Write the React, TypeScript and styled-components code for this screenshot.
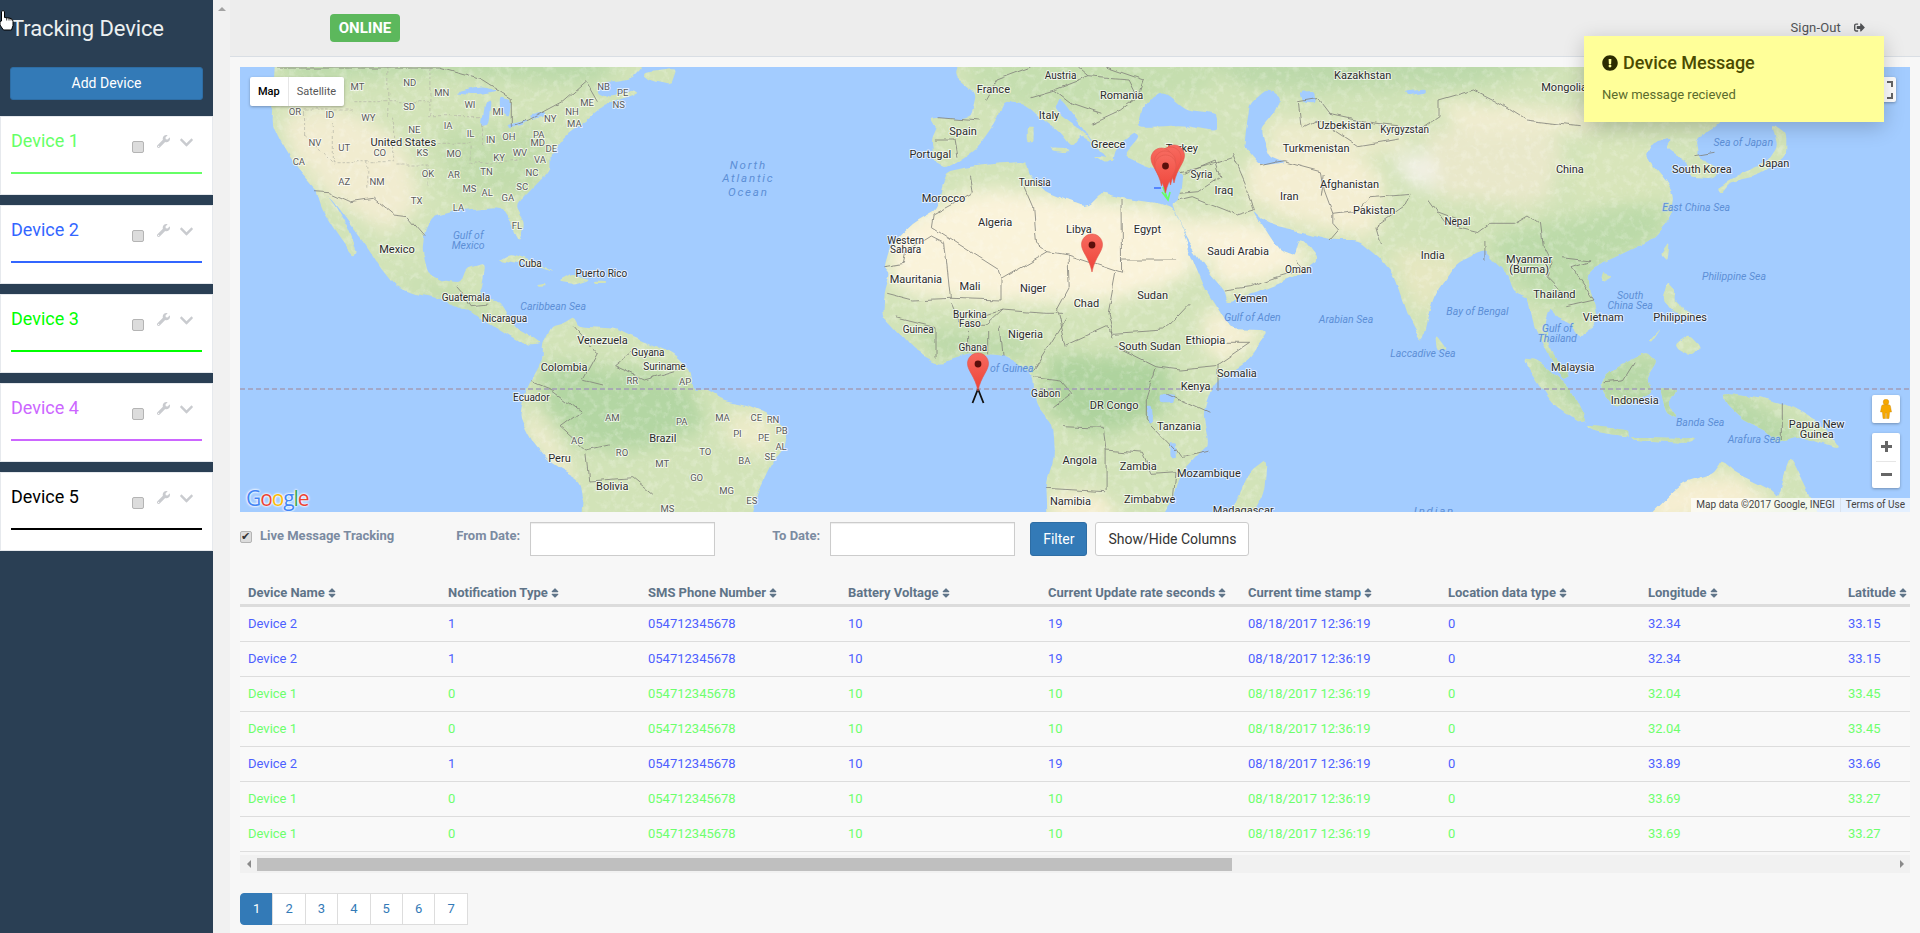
import React from "react";
import styled, { createGlobalStyle } from "styled-components";
import { FaChevronDown, FaExclamationCircle, FaSignOutAlt, FaSort, FaWrench } from "react-icons/fa";

const GlobalStyle = createGlobalStyle`
  html, body {
    margin: 0;
    padding: 0;
    height: 100%;
    overflow: hidden;
  }
  body {
    font-family: Roboto, "Liberation Sans", sans-serif;
    font-size: 13px;
    color: #73879c;
    background: #f7f7f7;
  }
`;

const Page = styled.div`
  width: 1920px;
  height: 933px;
  display: flex;
  position: relative;
  overflow: hidden;
`;

/* ---------- sidebar ---------- */

const Sidebar = styled.aside`
  width: 213px;
  flex: none;
  background: #2a3f54;
  display: flex;
  flex-direction: column;
`;

const Brand = styled.h1`
  margin: 0;
  padding: 16px 0 0 11px;
  height: 51px;
  box-sizing: border-box;
  font-size: 22px;
  line-height: 26px;
  font-weight: 400;
  letter-spacing: -0.1px;
  color: #ecf0f1;
`;

const AddButton = styled.button`
  display: block;
  margin: 16px 10px;
  width: 193px;
  height: 33px;
  padding: 0 0 2px;
  background: #337ab7;
  border: 1px solid #2e6da4;
  border-radius: 3px;
  color: #fff;
  font: 400 14px Roboto, sans-serif;
`;

const DeviceCard = styled.section`
  height: 79px;
  box-sizing: border-box;
  margin-bottom: 10px;
  padding: 0 10px;
  background: #fff;
  border: 1px solid #e6e9ed;
`;

const CardHead = styled.div`
  height: 55px;
  display: flex;
  align-items: flex-start;
  padding-right: 8px;
`;

const DeviceName = styled.div<{ $color: string }>`
  flex: 1;
  margin-top: 12px;
  font-size: 18px;
  line-height: 24px;
  color: ${(p) => p.$color};
`;

const Check = styled.input.attrs({ type: "checkbox" })`
  appearance: none;
  margin: 0;
  width: 12px;
  height: 12px;
  flex: none;
  position: relative;
  background: #dcdcdc;
  border: 1px solid #b4b4b4;
  border-radius: 2px;
  box-sizing: border-box;

  &:checked::after {
    content: "✔";
    position: absolute;
    left: 0;
    top: -3px;
    font-size: 11px;
    line-height: 14px;
    color: #333;
  }
`;

const CardCheck = styled(Check)`
  margin: 24px 0 0 0;
`;

const CardTool = styled.span<{ $gap: number; $top: number; $size: number }>`
  display: inline-flex;
  margin: ${(p) => p.$top}px 0 0 ${(p) => p.$gap}px;
  color: #c9cbcf;
  font-size: ${(p) => p.$size}px;
`;

const ColorLine = styled.div<{ $color: string }>`
  height: 2px;
  background: ${(p) => p.$color};
`;

const SideScroll = styled.div`
  width: 17px;
  flex: none;
  background: #f1f1f1;
  display: flex;
  justify-content: center;
  padding-top: 7px;
  box-sizing: border-box;
`;

const UpArrow = styled.span`
  width: 0;
  height: 0;
  border-left: 4px solid transparent;
  border-right: 4px solid transparent;
  border-bottom: 4px solid #a3a3a3;
`;

/* ---------- main column ---------- */

const Main = styled.main`
  flex: 1;
  min-width: 0;
  display: flex;
  flex-direction: column;
  background: #f7f7f7;
`;

const TopBar = styled.header`
  height: 57px;
  flex: none;
  box-sizing: border-box;
  background: #ededed;
  border-bottom: 1px solid #d9dee4;
  display: flex;
  align-items: center;
  justify-content: space-between;
  padding: 0 55px 0 100px;
`;

const OnlineBadge = styled.span`
  width: 70px;
  height: 28px;
  background: #5cb85c;
  border-radius: 4px;
  color: #fff;
  font-size: 15px;
  font-weight: 700;
  line-height: 28px;
  text-align: center;
`;

const SignOut = styled.a`
  display: flex;
  align-items: center;
  gap: 13px;
  color: #515356;
  font-size: 13px;
  letter-spacing: 0.15px;
  margin-bottom: 1px;

  svg {
    width: 11px;
    height: 11px;
  }
`;

const Content = styled.div`
  padding: 10px 10px 0;
  display: flex;
  flex-direction: column;
`;

/* ---------- map ---------- */

const MapBox = styled.div`
  position: relative;
  width: 1670px;
  height: 445px;
  overflow: hidden;
  background: #a3ccff;
`;

const MapSvg = styled.svg`
  display: block;
`;

type LabelKind = "country" | "state" | "sea" | "small" | "ocean";

const MapLabel = styled.text<{ $kind: LabelKind }>`
  font-family: Roboto, sans-serif;
  text-anchor: middle;
  dominant-baseline: central;
  paint-order: stroke;
  stroke-linejoin: round;
  font-size: ${(p) => ({ country: 11, state: 9.5, sea: 10.5, small: 10, ocean: 11.5 })[p.$kind]}px;
  letter-spacing: ${(p) => (p.$kind === "ocean" ? 1.8 : 0)}px;
  font-style: ${(p) => (p.$kind === "sea" || p.$kind === "ocean" ? "italic" : "normal")};
  fill: ${(p) =>
    p.$kind === "sea" || p.$kind === "ocean" ? "#5d8fd6" : p.$kind === "state" ? "#5a5a5a" : "#2b2b2b"};
  stroke: ${(p) =>
    p.$kind === "sea" || p.$kind === "ocean" ? "rgba(163,204,255,.6)" : "rgba(255,255,255,.7)"};
  stroke-width: ${(p) => (p.$kind === "sea" || p.$kind === "ocean" ? 1 : 2)}px;
`;

const MapTypeBar = styled.div`
  position: absolute;
  left: 10px;
  top: 10px;
  height: 29px;
  display: flex;
  background: #fff;
  border-radius: 2px;
  box-shadow: 0 1px 3px rgba(0, 0, 0, 0.3);
  font-size: 11px;
  line-height: 29px;
`;

const MapType = styled.span<{ $active?: boolean }>`
  padding: 0 8px;
  color: ${(p) => (p.$active ? "#000" : "#565656")};
  font-weight: ${(p) => (p.$active ? 500 : 400)};
  border-left: ${(p) => (p.$active ? "none" : "1px solid #e6e6e6")};
`;

const MapButton = styled.div<{ $top: number; $right: number; $w: number; $h: number }>`
  position: absolute;
  top: ${(p) => p.$top}px;
  right: ${(p) => p.$right}px;
  width: ${(p) => p.$w}px;
  height: ${(p) => p.$h}px;
  background: #fff;
  border-radius: 2px;
  box-shadow: 0 1px 3px rgba(0, 0, 0, 0.3);
  display: flex;
  flex-direction: column;
  align-items: center;
  justify-content: center;
`;

const ZoomStep = styled.div`
  flex: 1;
  width: 100%;
  display: flex;
  align-items: center;
  justify-content: center;
  & + & {
    position: relative;
  }
  & + &::before {
    content: "";
    position: absolute;
    top: 0;
    left: 4px;
    right: 4px;
    height: 1px;
    background: #e6e6e6;
  }
`;

const GoogleMark = styled.div`
  position: absolute;
  left: 6px;
  bottom: 2px;
  font: 500 21px/24px "Open Sans", Roboto, sans-serif;
  letter-spacing: -1.1px;
  text-shadow: 0 0 2px #fff, 0 0 2px #fff, 0 0 3px #fff;
`;

const Letter = styled.span<{ $color: string }>`
  color: ${(p) => p.$color};
`;

const Attribution = styled.div`
  position: absolute;
  right: 0;
  bottom: 0;
  height: 14px;
  display: flex;
  background: rgba(255, 255, 255, 0.7);
  font-size: 10px;
  line-height: 14px;
  color: #444;
`;

const AttrPart = styled.span`
  padding: 0 5px;
  & + & {
    border-left: 1px solid #d8e2ee;
  }
`;

/* ---------- filter row ---------- */

const FilterRow = styled.form`
  height: 34px;
  margin-top: 10px;
  display: flex;
  align-items: flex-start;
`;

const TrackCheck = styled(Check)`
  margin-top: 9px;
`;

const FieldLabel = styled.label<{ $left: number; $right?: number }>`
  margin: 6px ${(p) => p.$right ?? 0}px 0 ${(p) => p.$left}px;
  font-size: 13px;
  line-height: 16px;
  font-weight: 700;
  color: #7b8ba1;
`;

const DateInput = styled.input`
  width: 185px;
  height: 34px;
  box-sizing: border-box;
  background: #fff;
  border: 1px solid #ccc;
  box-shadow: inset 0 1px 1px rgba(0, 0, 0, 0.075);
`;

const Btn = styled.button<{ $primary?: boolean }>`
  height: 34px;
  box-sizing: border-box;
  margin-left: ${(p) => (p.$primary ? 15 : 8)}px;
  padding: 0 12px;
  border-radius: 3px;
  border: 1px solid ${(p) => (p.$primary ? "#2e6da4" : "#ccc")};
  background: ${(p) => (p.$primary ? "#337ab7" : "#fff")};
  color: ${(p) => (p.$primary ? "#fff" : "#333")};
  font: 400 14px Roboto, sans-serif;
`;

/* ---------- table ---------- */

const TableClip = styled.div`
  margin-top: 11px;
  width: 1670px;
  overflow: hidden;
`;

const Table = styled.table`
  width: 1800px;
  table-layout: fixed;
  border-collapse: separate;
  border-spacing: 0;
`;

const Th = styled.th`
  width: 200px;
  height: 40px;
  box-sizing: border-box;
  padding: 0 8px 3px;
  vertical-align: bottom;
  text-align: left;
  font-size: 13px;
  line-height: 16px;
  font-weight: 700;
  color: #5f7488;
  border-bottom: 3px solid #dcdcdc;
  white-space: nowrap;

  svg {
    width: 8px;
    height: 12px;
    margin-left: 3px;
    vertical-align: -2px;
  }
`;

const Tr = styled.tr<{ $color: string }>`
  color: ${(p) => p.$color};
  background: #f9f9f9;
`;

const Td = styled.td`
  height: 35px;
  box-sizing: border-box;
  padding: 7px 8px 9px;
  font-size: 13px;
  border-bottom: 1px solid #ddd;
  white-space: nowrap;
`;

const HScroll = styled.div`
  width: 1670px;
  height: 18px;
  margin-top: 3px;
  display: flex;
  align-items: center;
  background: #f1f1f1;
`;

const HArrow = styled.span<{ $dir: "left" | "right" }>`
  width: 17px;
  flex: none;
  display: flex;
  justify-content: center;
  &::before {
    content: "";
    border-top: 4px solid transparent;
    border-bottom: 4px solid transparent;
    ${(p) => (p.$dir === "left" ? "border-right" : "border-left")}: 4px solid #8a8a8a;
  }
`;

const HTrack = styled.div`
  flex: 1;
  height: 13px;
`;

const HThumb = styled.div`
  height: 13px;
  background: #bfbfbf;
`;

const Pager = styled.nav`
  margin-top: 20px;
  display: flex;
`;

const PageCell = styled.a<{ $active?: boolean }>`
  width: 33.4px;
  height: 32px;
  box-sizing: border-box;
  margin-left: ${(p) => (p.$active ? 0 : -1)}px;
  background: ${(p) => (p.$active ? "#337ab7" : "#fff")};
  color: ${(p) => (p.$active ? "#fff" : "#337ab7")};
  border: 1px solid ${(p) => (p.$active ? "#337ab7" : "#ddd")};
  border-radius: ${(p) => (p.$active ? "4px 0 0 4px" : "0")};
  font-size: 13px;
  line-height: 30px;
  text-align: center;
  flex: none;
`;

/* ---------- overlays ---------- */

const Toast = styled.div`
  position: absolute;
  top: 36px;
  right: 36px;
  width: 300px;
  height: 86px;
  box-sizing: border-box;
  padding: 15px 18px;
  background: #ffff99;
  box-shadow: 0 5px 20px rgba(0, 0, 0, 0.2);
  z-index: 5;
`;

const ToastTitle = styled.div`
  display: flex;
  align-items: center;
  gap: 5px;
  font-size: 18px;
  line-height: 24px;
  font-weight: 500;
  color: #4b4b00;

  svg {
    width: 16px;
    height: 16px;
    color: #2b2b00;
  }
`;

const ToastBody = styled.div`
  margin-top: 11px;
  font-size: 13px;
  line-height: 18px;
  color: #5a6b2c;
`;

const HandCursor = styled.svg`
  position: absolute;
  left: 0;
  top: 9px;
  z-index: 6;
`;

/* ---------- map drawing data (traced in zoom coordinates, projected below) ---------- */

const toPoints = (pts: string, east: boolean) =>
  pts
    .trim()
    .split(/\s+/)
    .map((p) => {
      const [x, y] = p.split(",").map(Number);
      return [x * 0.574 + (east ? 780 : -10), y / 3 - 7] as [number, number];
    });

// closed shape with only the tips of the corners rounded, thin peninsulas have to survive
const blob = (pts: string, east = false) => {
  const p = toPoints(pts, east);
  const at = (a: number[], b: number[], t: number) =>
    `${(a[0] + (b[0] - a[0]) * t).toFixed(1)},${(a[1] + (b[1] - a[1]) * t).toFixed(1)}`;
  let d = "";
  p.forEach((pt, i) => {
    const prev = p[(i + p.length - 1) % p.length];
    const next = p[(i + 1) % p.length];
    d += `${i === 0 ? "M" : "L"}${at(pt, prev, 0.25)} Q${pt[0].toFixed(1)},${pt[1].toFixed(1)} ${at(pt, next, 0.25)} `;
  });
  return d + "Z";
};

const line = (pts: string, east = false) =>
  "M" + toPoints(pts, east).map((p) => `${p[0].toFixed(1)},${p[1].toFixed(1)}`).join(" L");

const LAND_W = [
  "80,-30 75,100 72,190 85,240 110,310 150,392 172,405 205,480 240,560 262,620 290,680 330,705 365,715 400,740 445,780 490,830 520,860 545,855 525,830 495,800 480,750 470,725 430,715 440,680 445,610 410,625 400,670 370,665 345,640 335,570 340,510 355,470 400,450 470,440 490,490 505,542 515,490 498,440 520,400 560,330 560,280 590,215 620,185 640,150 660,135 710,100 700,90 665,115 640,100 645,70 700,55 720,20 700,-30",
  "150,392 165,392 185,440 205,500 222,575 212,585 185,520 160,450",
  "720,40 780,25 770,75 735,62",
  "470,600 490,580 520,600 568,638 530,618 495,606",
  "570,665 595,640 628,655 600,672",
  "635,665 655,665 655,672 635,672",
  "535,672 550,668 552,676 538,678",
  "545,855 560,800 580,790 600,770 610,800 670,805 700,830 770,880 800,930 805,985 830,990 860,1020 900,1035 940,1065 972,1110 965,1170 945,1210 920,1300 905,1400 610,1400 615,1310 610,1260 560,1210 525,1140 505,1070 510,1020 525,965 545,900",
  "1250,335 1290,320 1340,310 1390,305 1395,345 1420,395 1450,415 1492,442 1520,395 1556,415 1616,430 1641,445 1655,500 1680,610 1700,690 1730,770 1740,805 1812,808 1775,900 1715,965 1695,1060 1705,1150 1690,1175 1655,1240 1645,1300 1615,1400 1425,1400 1422,1270 1436,1190 1432,1090 1405,1030 1400,940 1345,885 1290,880 1235,912 1190,870 1160,810 1138,770 1140,700 1150,640 1140,620 1150,560 1190,490 1230,450 1240,380",
];

const LAND_E = [
  "-156,170 -86,175 -76,100 -115,45 -90,-30 1250,-30 1260,100 1220,190 1175,240 1180,290 1222,330 1205,355 1170,350 1165,310 1125,265 1135,235 1105,245 1090,290 1120,350 1140,400 1135,470 1100,540 1040,590 1000,620 985,650 1000,720 1005,790 975,830 960,790 935,775 925,740 915,790 925,870 960,950 945,962 920,880 895,800 885,710 860,690 850,640 825,600 810,570 760,610 720,710 700,845 680,790 650,640 625,590 590,540 545,540 490,515 430,490 405,450 450,570 480,590 490,530 522,600 490,640 440,680 360,725 355,690 330,640 290,540 272,470 265,435 275,420 282,390 285,335 230,325 180,285 205,235 200,215 165,265 160,310 125,240 105,190 70,110 60,150 115,220 125,245 105,225 90,260 70,215 35,170 10,130 -30,120 -41,185 -76,270 -126,325 -150,300 -156,240 -146,200",
  "10,200 22,200 22,250 10,250",
  "55,265 85,268 80,280 58,275",
  "130,290 165,295 150,310",
  "370,1350 400,1235 430,1195 425,1300 395,1400 360,1400",
  "725,822 745,868 728,872",
  "1132,545 1128,600 1118,580",
  "1015,640 1032,650 1012,668",
  "1310,190 1335,220 1335,290 1290,345 1238,365 1222,398 1215,380 1250,345 1300,310 1320,260",
  "1130,668 1142,690 1140,730 1178,772 1140,760 1120,720",
  "1140,850 1165,820 1186,860 1170,888 1145,866",
  "1095,842 1118,800 1100,845",
  "875,895 900,900 960,990 985,1080 970,1085 925,1030",
  "1010,965 1040,920 1092,875 1110,905 1090,960 1100,1000 1040,1045 1020,1000",
  "1115,980 1145,985 1130,1030 1145,1080 1125,1060",
  "980,1095 1060,1110 1060,1130 1000,1115",
  "1060,1130 1180,1135 1170,1150 1070,1140",
  "1225,1000 1290,1015 1340,1040 1400,1100 1430,1170 1360,1130 1320,1150 1300,1110 1260,1080 1230,1030",
  "1075,1400 1150,1270 1205,1240 1222,1200 1250,1240 1310,1290 1320,1310 1340,1180 1380,1320 1400,1400",
];

const WATER_W = [
  "390,100 440,80 470,95 430,106",
  "445,130 456,120 452,190 438,196",
  "470,112 490,120 486,170 470,150",
  "482,195 520,180 515,190 490,206",
  "522,166 550,155 546,170 526,176",
];

const WATER_E = [
  "205,200 215,130 250,95 290,150 345,160 345,215 280,195 240,200",
  "400,130 430,85 455,115 440,170 420,210 435,290 465,310 420,320 390,260 395,200",
  "490,95 515,92 515,130 495,128",
  "670,95 705,88 705,98 675,106",
  "245,1000 268,1000 268,1030 245,1030",
  "222,1040 230,1040 232,1090 222,1090",
  "262,1150 270,1150 272,1195 262,1195",
];

type Patch = { color: string; pts: string; east?: boolean };

const PATCHES: Patch[] = [
  { color: "#bad9a9", pts: "80,-30 700,-30 640,80 360,40 100,60" },
  { color: "#c2dcac", pts: "350,200 560,200 540,400 400,430" },
  { color: "#f1ecd0", pts: "90,150 220,150 300,250 320,330 330,450 270,520 180,420 100,280" },
  { color: "#bcd9a9", pts: "270,640 400,700 500,830 360,720" },
  { color: "#b3d6a3", pts: "540,900 800,950 830,1100 700,1180 600,1150 540,1020" },
  { color: "#ecebc9", pts: "880,1030 960,1100 930,1200 860,1130" },
  { color: "#f3edd0", pts: "505,1060 540,1070 610,1280 570,1260" },
  { color: "#faf3da", pts: "1150,500 1300,380 1400,400 1650,450 1690,640 1560,720 1400,730 1250,720 1150,680" },
  { color: "#f4efd3", pts: "1700,730 1810,810 1740,920 1690,870" },
  { color: "#bcd9a9", pts: "1180,800 1400,830 1400,900 1240,900" },
  { color: "#aed39e", pts: "1420,880 1640,900 1640,1060 1500,1130 1420,1040" },
  { color: "#f5eed1", pts: "50,1290 150,1300 180,1400 50,1400", east: true },
  { color: "#f9f2d9", pts: "280,470 420,480 520,600 420,670 360,690 300,560", east: true },
  { color: "#f4eed2", pts: "390,300 560,250 640,360 620,540 500,500 400,430", east: true },
  { color: "#ecebcb", pts: "430,160 700,230 650,280 430,300", east: true },
  { color: "#e9e8ca", pts: "700,200 950,220 920,440 720,410", east: true },
  { color: "#f1edd0", pts: "720,120 1000,150 1000,220 760,210", east: true },
  { color: "#f6eed1", pts: "1090,1280 1230,1230 1330,1340 1090,1400", east: true },
  { color: "#e6e7c1", pts: "640,560 780,600 700,780", east: true },
  { color: "#bcdaa9", pts: "820,520 1130,420 1120,530 1000,640 1000,780 900,720 830,620", east: true },
  { color: "#b8d8a7", pts: "870,880 1120,880 1430,1170 1000,1120", east: true },
  { color: "#c5deaf", pts: "-110,-30 340,-30 340,100 100,150 -60,130", east: true },
  { color: "#bcd9aa", pts: "300,-30 1000,-30 800,80 400,90", east: true },
  { color: "#d8e5ba", pts: "1000,220 1120,260 1140,430 950,420", east: true },
  { color: "#f3f1e6", pts: "650,270 720,290 730,400 670,360", east: true },
];

const BORDERS_W = [
  "82,24 365,24 440,60 490,115 490,200 520,180 580,125 620,65 640,125",
  "148,395 175,398 210,425 250,415 285,465 310,470 340,530",
  "395,680 405,700 420,740 450,735",
  "600,800 640,880 615,960 650,975",
  "700,880 670,920 720,960 790,925",
  "525,965 560,990 610,1055 575,1100 620,1170 660,1155",
  "620,1180 625,1260 700,1250 735,1300",
  "1290,350 1295,400 1225,465 1222,500 1340,630 1345,655",
  "1140,620 1175,610 1180,570 1222,525 1245,545 1255,715 1190,720 1145,700",
  "1255,715 1345,720 1345,655 1425,575 1460,585",
  "1385,380 1400,440 1405,550 1425,575",
  "1460,585 1555,640 1554,420",
  "1554,600 1650,600",
  "1460,585 1462,680 1440,750 1455,860",
  "1543,640 1530,760 1540,830",
  "1310,770 1345,750 1420,760 1450,760",
  "1455,780 1400,930",
  "1255,730 1270,790 1320,790 1345,750",
  "1285,810 1285,880",
  "1320,810 1320,880",
  "1340,800 1345,890",
  "1160,770 1230,800 1230,890",
];

const BORDERS_E = [
  "25,950 70,960 90,1000 60,1040",
  "75,1100 145,1105 150,1170 215,1180 230,1240",
  "235,925 220,1010 220,1080 270,1170",
  "80,855 150,800 165,820 250,810 265,790 295,735",
  "165,860 235,920 280,930 340,920 400,850 360,850",
  "345,915 345,990",
  "255,1000 330,1060",
  "45,1285 150,1295",
  "150,1170 150,1290",
  "270,1165 280,1190 330,1170",
  "230,1240 270,1235 265,1320",
  "355,690 400,680 450,650 490,630 480,600",
  "275,420 300,410 380,465 410,450",
  "285,340 340,300 350,350 310,395 280,400",
  "370,280 385,340 405,420 410,450",
  "280,335 345,305 370,290",
  "420,320 460,305 525,335 530,390 545,460 545,490 555,510 540,540",
  "545,460 590,450 610,410 680,400",
  "530,345 525,410",
  "485,125 490,205 520,180 590,260 660,240",
  "485,125 520,115 540,160 620,190 700,205 730,170 730,120 790,90 830,125 880,180 975,200",
  "680,400 670,440 620,500 630,560",
  "710,420 740,490 800,515 820,490 860,490 885,465 905,490",
  "725,455 780,490",
  "810,540 810,600",
  "905,490 910,560 925,610 920,650 960,720",
  "945,590 995,600 960,620 1000,720 950,740",
  "1175,290 1210,280",
  "1070,905 1050,960 1015,965",
  "1328,1030 1328,1142",
  "20,110 60,90 120,50 190,60 205,110 175,150 125,190",
  "60,90 90,130 140,160",
  "120,50 100,21",
  "205,110 215,60 150,21",
  "-60,120 -40,60 20,21",
  "-150,240 -115,240 -110,290",
  "-140,170 -70,180",
];

const STATES = [
  "275,24 275,170",
  "215,125 350,125",
  "350,24 350,165",
  "180,195 180,305 285,305 285,170",
  "130,225 180,310",
  "240,305 240,390",
  "290,315 345,315 345,380",
  "290,250 420,250",
  "345,170 440,170",
  "440,190 440,260",
  "420,260 420,310 510,300",
  "130,225 130,150 215,150",
];

const LABELS_W: [string, number, number, LabelKind][] = [
  ["MT", 222, 78, "state"], ["ND", 313, 66, "state"], ["MN", 369, 96, "state"], ["WI", 418, 132, "state"], ["MI", 467, 153, "state"],
  ["SD", 312, 138, "state"], ["OR", 113, 153, "state"], ["ID", 174, 162, "state"], ["WY", 241, 173, "state"], ["NE", 321, 207, "state"],
  ["IA", 380, 195, "state"], ["IL", 419, 220, "state"], ["IN", 454, 237, "state"], ["OH", 486, 228, "state"], ["PA", 538, 222, "state"],
  ["NY", 558, 174, "state"], ["NH", 596, 153, "state"], ["ME", 622, 126, "state"], ["NB", 651, 78, "state"], ["PE", 684, 96, "state"],
  ["NS", 677, 132, "state"], ["MA", 600, 189, "state"], ["MD", 536, 248, "state"], ["DE", 560, 264, "state"], ["NV", 148, 246, "state"],
  ["UT", 199, 261, "state"], ["CO", 261, 276, "state"], ["KS", 335, 276, "state"], ["MO", 390, 279, "state"], ["KY", 469, 291, "state"],
  ["WV", 505, 276, "state"], ["VA", 540, 297, "state"], ["CA", 120, 303, "state"], ["AZ", 199, 363, "state"], ["NM", 256, 363, "state"],
  ["OK", 345, 339, "state"], ["AR", 390, 342, "state"], ["TN", 447, 333, "state"], ["NC", 526, 336, "state"], ["MS", 417, 384, "state"],
  ["AL", 448, 396, "state"], ["GA", 484, 411, "state"], ["SC", 509, 378, "state"], ["TX", 325, 420, "state"], ["LA", 398, 441, "state"],
  ["FL", 500, 496, "state"],
  ["United States", 302, 246, "country"], ["Mexico", 291, 567, "country"], ["Guatemala", 411, 711, "small"], ["Nicaragua", 478, 775, "small"],
  ["Cuba", 523, 609, "small"], ["Puerto Rico", 647, 640, "small"], ["Venezuela", 649, 840, "country"], ["Guyana", 728, 877, "small"],
  ["Suriname", 757, 919, "small"], ["Colombia", 582, 921, "country"], ["Ecuador", 525, 1011, "small"], ["Peru", 574, 1195, "country"],
  ["Bolivia", 666, 1278, "country"], ["Brazil", 754, 1135, "country"],
  ["RR", 701, 961, "state"], ["AP", 793, 963, "state"], ["AM", 666, 1072, "state"], ["PA", 787, 1083, "state"], ["MA", 858, 1071, "state"],
  ["CE", 917, 1071, "state"], ["RN", 946, 1077, "state"], ["PB", 961, 1110, "state"], ["PI", 884, 1119, "state"], ["PE", 930, 1131, "state"],
  ["AL", 960, 1158, "state"], ["SE", 941, 1188, "state"], ["TO", 828, 1173, "state"], ["BA", 896, 1200, "state"], ["RO", 683, 1177, "state"],
  ["AC", 605, 1140, "state"], ["MT", 753, 1210, "state"], ["GO", 813, 1252, "state"], ["MG", 865, 1290, "state"], ["ES", 909, 1320, "state"],
  ["MS", 762, 1345, "state"],
  ["France", 1330, 87, "country"], ["Spain", 1277, 213, "country"], ["Portugal", 1220, 282, "country"], ["Italy", 1427, 165, "country"],
  ["Greece", 1530, 253, "country"], ["Austria", 1447, 45, "small"], ["Tunisia", 1402, 366, "small"], ["Morocco", 1243, 414, "country"],
  ["Algeria", 1333, 486, "country"], ["Libya", 1479, 507, "country"], ["Western", 1177, 540, "small"], ["Sahara", 1177, 567, "small"],
  ["Mauritania", 1195, 657, "country"], ["Mali", 1289, 678, "country"], ["Niger", 1399, 684, "country"], ["Chad", 1492, 729, "country"],
  ["Burkina", 1289, 762, "small"], ["Faso", 1289, 790, "small"], ["Guinea", 1199, 807, "small"], ["Nigeria", 1386, 822, "country"],
  ["Ghana", 1294, 861, "small"], ["Gabon", 1421, 999, "small"],
  ["North", 903, 316, "ocean"], ["Atlantic", 903, 355, "ocean"], ["Ocean", 903, 395, "ocean"], ["Gulf of", 415, 525, "sea"], ["Mexico", 415, 556, "sea"],
  ["Caribbean Sea", 563, 738, "sea"], ["of Guinea", 1362, 925, "sea"],
];

const LABELS_E: [string, number, number, LabelKind][] = [
  ["Romania", 177, 105, "country"], ["DR Congo", 164, 1036, "country"],
  ["Kazakhstan", 597, 45, "country"], ["Mongolia", 948, 82, "country"], ["Uzbekistan", 565, 195, "country"], ["Kyrgyzstan", 670, 207, "small"],
  ["Turkmenistan", 516, 265, "country"], ["Turkey", 282, 265, "country"], ["Syria", 316, 343, "small"], ["Iraq", 355, 390, "country"],
  ["Iran", 469, 408, "country"], ["Afghanistan", 574, 372, "country"], ["Pakistan", 617, 450, "country"], ["China", 958, 327, "country"],
  ["South Korea", 1188, 327, "country"], ["Japan", 1314, 310, "country"], ["Nepal", 762, 483, "small"], ["India", 719, 585, "country"],
  ["Myanmar", 887, 598, "country"], ["(Burma)", 887, 628, "country"], ["Thailand", 931, 702, "country"], ["Vietnam", 1016, 772, "country"],
  ["Philippines", 1150, 772, "country"], ["Malaysia", 963, 922, "country"], ["Indonesia", 1071, 1020, "country"], ["Papua New", 1388, 1093, "country"],
  ["Guinea", 1388, 1123, "country"], ["Egypt", 222, 507, "country"], ["Saudi Arabia", 380, 573, "country"], ["Oman", 485, 628, "small"],
  ["Yemen", 402, 714, "country"], ["Sudan", 231, 705, "country"], ["South Sudan", 226, 858, "country"], ["Ethiopia", 323, 840, "country"],
  ["Somalia", 378, 939, "country"], ["Kenya", 306, 978, "country"], ["Tanzania", 277, 1098, "country"], ["Angola", 104, 1200, "country"],
  ["Zambia", 206, 1218, "country"], ["Mozambique", 329, 1240, "country"], ["Namibia", 88, 1323, "country"], ["Zimbabwe", 226, 1318, "country"],
  ["Madagascar", 389, 1352, "country"],
  ["Sea of Japan", 1260, 246, "sea"], ["East China Sea", 1178, 441, "sea"], ["Philippine Sea", 1244, 648, "sea"], ["South", 1063, 705, "sea"],
  ["China Sea", 1063, 735, "sea"], ["Bay of Bengal", 797, 754, "sea"], ["Arabian Sea", 568, 777, "sea"], ["Gulf of Aden", 405, 771, "sea"],
  ["Laccadive Sea", 702, 879, "sea"], ["Gulf of", 936, 806, "sea"], ["Thailand", 936, 835, "sea"], ["Banda Sea", 1185, 1086, "sea"],
  ["Arafura Sea", 1279, 1137, "sea"], ["Indian", 722, 1352, "ocean"],
];

const Pin: React.FC<{ x: number; y: number; dot?: boolean }> = ({ x, y, dot = true }) => (
  <g transform={`translate(${x} ${y})`}>
    <path
      d="M10.5 0C4.7 0 0 4.7 0 10.5C0 18 7.5 23 10.5 38C13.5 23 21 18 21 10.5C21 4.7 16.3 0 10.5 0Z"
      fill="url(#pinFill)"
      stroke="#e0574c"
      strokeWidth="0.6"
    />
    {dot && <circle cx="10.5" cy="11" r="3.4" fill="#5b0f0b" />}
  </g>
);

const WorldMap: React.FC = () => (
  <MapSvg width="1670" height="445" viewBox="0 0 1670 445">
    <defs>
      <linearGradient id="pinFill" x1="0" y1="0" x2="0" y2="1">
        <stop offset="0" stopColor="#f76a5f" />
        <stop offset="1" stopColor="#ee4237" />
      </linearGradient>
      <filter id="soft" x="-30%" y="-30%" width="160%" height="160%">
        <feGaussianBlur stdDeviation="9" />
      </filter>
      <filter id="rough" filterUnits="userSpaceOnUse" x="-30" y="-30" width="1730" height="505">
        <feTurbulence type="fractalNoise" baseFrequency="0.045" numOctaves="3" seed="7" />
        <feDisplacementMap in="SourceGraphic" scale="7" xChannelSelector="R" yChannelSelector="G" />
      </filter>
      <filter id="mottle" filterUnits="userSpaceOnUse" x="0" y="0" width="1670" height="445">
        <feTurbulence type="fractalNoise" baseFrequency="0.14" numOctaves="3" seed="3" />
        <feColorMatrix values="0 0 0 0 1  0 0 0 0 1  0 0 0 0 0.95  0 0 0 3.2 -1.5" />
      </filter>
      <clipPath id="landClip">
        {LAND_W.map((d, i) => <path key={i} d={blob(d)} />)}
        {LAND_E.map((d, i) => <path key={i} d={blob(d, true)} />)}
      </clipPath>
    </defs>
    <rect width="1670" height="445" fill="#a3ccff" />
    <g filter="url(#rough)">
      {LAND_W.map((d, i) => <path key={i} d={blob(d)} fill="#d2e3b8" />)}
      {LAND_E.map((d, i) => <path key={i} d={blob(d, true)} fill="#d2e3b8" />)}
      <g clipPath="url(#landClip)">
        <g filter="url(#soft)">
          {PATCHES.map((p, i) => <path key={i} d={blob(p.pts, p.east)} fill={p.color} />)}
        </g>
        <rect width="1670" height="445" filter="url(#mottle)" opacity="0.22" />
      </g>
      {WATER_W.map((d, i) => <path key={i} d={blob(d)} fill="#a3ccff" />)}
      {WATER_E.map((d, i) => <path key={i} d={blob(d, true)} fill="#a3ccff" />)}
      <g fill="none" stroke="#b5b5a6" strokeWidth="0.7" strokeDasharray="3 2">
        {STATES.map((d, i) => <path key={i} d={line(d)} />)}
      </g>
      <g fill="none" stroke="#80807a" strokeWidth="0.8">
        {BORDERS_W.map((d, i) => <path key={i} d={line(d)} />)}
        {BORDERS_E.map((d, i) => <path key={i} d={line(d, true)} />)}
      </g>
    </g>
    <line x1="0" y1="322" x2="1670" y2="322" stroke="#a39cb6" strokeWidth="1.5" strokeDasharray="5 3" />
    {LABELS_W.map(([t, x, y, k], i) => (
      <MapLabel key={i} $kind={k} x={x * 0.574 - 10} y={y / 3 - 7}>{t}</MapLabel>
    ))}
    {LABELS_E.map(([t, x, y, k], i) => (
      <MapLabel key={i} $kind={k} x={x * 0.574 + 780} y={y / 3 - 7}>{t}</MapLabel>
    ))}
    <path d="M922,125 L928,133 L930,125 M928,133 L923,120" fill="none" stroke="#66ff66" strokeWidth="1.6" />
    <path d="M914,121 h7" stroke="#3366ff" strokeWidth="1.4" />
    <Pin x={923.5} y={78} dot={false} />
    <Pin x={920} y={80} dot={false} />
    <Pin x={911} y={81} dot={false} />
    <Pin x={914.5} y={84} dot={false} />
    <Pin x={915} y={88} />
    <Pin x={841.5} y={167} />
    <path d="M738,322 L732.5,336 M738,322 L743.5,336" fill="none" stroke="#111" strokeWidth="1.8" />
    <Pin x={727.5} y={286} />
  </MapSvg>
);

const Pegman = () => (
  <svg width="12" height="20" viewBox="0 0 12 20">
    <circle cx="6" cy="3" r="2.8" fill="#f6a800" stroke="#c98400" strokeWidth="0.4" />
    <path d="M1.5 7.5C1.5 6 3 5.6 6 5.6S10.5 6 10.5 7.5L11.5 13H9.6L9 19.5H6.5V14H5.5V19.5H3L2.4 13H.5Z" fill="#f6a800" stroke="#c98400" strokeWidth="0.4" />
  </svg>
);

const devices = [
  { name: "Device 1", color: "#66ff66" },
  { name: "Device 2", color: "#3366ff" },
  { name: "Device 3", color: "#00ff00" },
  { name: "Device 4", color: "#cc66ff" },
  { name: "Device 5", color: "#000000" },
];

const columns = [
  "Device Name",
  "Notification Type",
  "SMS Phone Number",
  "Battery Voltage",
  "Current Update rate seconds",
  "Current time stamp",
  "Location data type",
  "Longitude",
  "Latitude",
];

const BLUE = "#4d5fff";
const GREEN = "#6dff6d";
const STAMP = "08/18/2017 12:36:19";
const PHONE = "054712345678";

const rows: { color: string; cells: string[] }[] = [
  { color: BLUE, cells: ["Device 2", "1", PHONE, "10", "19", STAMP, "0", "32.34", "33.15"] },
  { color: BLUE, cells: ["Device 2", "1", PHONE, "10", "19", STAMP, "0", "32.34", "33.15"] },
  { color: GREEN, cells: ["Device 1", "0", PHONE, "10", "10", STAMP, "0", "32.04", "33.45"] },
  { color: GREEN, cells: ["Device 1", "0", PHONE, "10", "10", STAMP, "0", "32.04", "33.45"] },
  { color: BLUE, cells: ["Device 2", "1", PHONE, "10", "19", STAMP, "0", "33.89", "33.66"] },
  { color: GREEN, cells: ["Device 1", "0", PHONE, "10", "10", STAMP, "0", "33.69", "33.27"] },
  { color: GREEN, cells: ["Device 1", "0", PHONE, "10", "10", STAMP, "0", "33.69", "33.27"] },
];

const App: React.FC = () => (
  <Page>
    <GlobalStyle />
    <HandCursor width="14" height="23" viewBox="0 0 14 23">
      <path
        d="M0 12.5L1.5 12V2.5Q3 .5 4.5 2.5V8.5L9 9L11 9.6Q13 10.4 13 12.5V16.5L11.5 21H3.5L2 19L0 16Z"
        fill="#fff"
        stroke="#000"
        strokeWidth="1"
      />
      <path d="M6.7 8.8V11.5M9 9V11.5M11 9.6V11.5" fill="none" stroke="#000" strokeWidth="0.8" />
    </HandCursor>
    <Sidebar>
      <Brand>Tracking Device</Brand>
      <AddButton type="button">Add Device</AddButton>
      {devices.map((d) => (
        <DeviceCard key={d.name}>
          <CardHead>
            <DeviceName $color={d.color}>{d.name}</DeviceName>
            <CardCheck />
            <CardTool $gap={13} $top={18} $size={13}><FaWrench /></CardTool>
            <CardTool $gap={9} $top={18} $size={15}><FaChevronDown /></CardTool>
          </CardHead>
          <ColorLine $color={d.color} />
        </DeviceCard>
      ))}
    </Sidebar>
    <SideScroll>
      <UpArrow />
    </SideScroll>
    <Main>
      <TopBar>
        <OnlineBadge>ONLINE</OnlineBadge>
        <SignOut>
          Sign-Out <FaSignOutAlt />
        </SignOut>
      </TopBar>
      <Content>
        <MapBox>
          <WorldMap />
          <MapTypeBar>
            <MapType $active>Map</MapType>
            <MapType>Satellite</MapType>
          </MapTypeBar>
          <MapButton $top={10} $right={14} $w={25} $h={25}>
            <svg width="18" height="18" viewBox="0 0 18 18" fill="none" stroke="#666" strokeWidth="2">
              <path d="M1 6V1H6M12 1H17V6M17 12V17H12M6 17H1V12" />
            </svg>
          </MapButton>
          <MapButton $top={328} $right={10} $w={28} $h={28}>
            <Pegman />
          </MapButton>
          <MapButton $top={366} $right={10} $w={28} $h={55}>
            <ZoomStep>
              <svg width="11" height="11" viewBox="0 0 11 11" fill="#666">
                <path d="M4 0H7V4H11V7H7V11H4V7H0V4H4Z" />
              </svg>
            </ZoomStep>
            <ZoomStep>
              <svg width="11" height="3" viewBox="0 0 11 3" fill="#666">
                <rect width="11" height="3" />
              </svg>
            </ZoomStep>
          </MapButton>
          <GoogleMark>
            <Letter $color="#4285f4">G</Letter>
            <Letter $color="#ea4335">o</Letter>
            <Letter $color="#fbbc05">o</Letter>
            <Letter $color="#4285f4">g</Letter>
            <Letter $color="#34a853">l</Letter>
            <Letter $color="#ea4335">e</Letter>
          </GoogleMark>
          <Attribution>
            <AttrPart>Map data ©2017 Google, INEGI</AttrPart>
            <AttrPart>Terms of Use</AttrPart>
          </Attribution>
        </MapBox>

        <FilterRow>
          <TrackCheck defaultChecked />
          <FieldLabel $left={8}>Live Message Tracking</FieldLabel>
          <FieldLabel $left={62} $right={10}>From Date:</FieldLabel>
          <DateInput />
          <FieldLabel $left={57} $right={10}>To Date:</FieldLabel>
          <DateInput />
          <Btn type="button" $primary>Filter</Btn>
          <Btn type="button">Show/Hide Columns</Btn>
        </FilterRow>

        <TableClip>
          <Table>
            <thead>
              <tr>
                {columns.map((c) => (
                  <Th key={c}>
                    {c}
                    <FaSort />
                  </Th>
                ))}
              </tr>
            </thead>
            <tbody>
              {rows.map((r, i) => (
                <Tr key={i} $color={r.color}>
                  {r.cells.map((c, j) => (
                    <Td key={j}>{c}</Td>
                  ))}
                </Tr>
              ))}
            </tbody>
          </Table>
        </TableClip>

        <HScroll>
          <HArrow $dir="left" />
          <HTrack>
            <HThumb style={{ width: `${(975 / 1636) * 100}%` }} />
          </HTrack>
          <HArrow $dir="right" />
        </HScroll>

        <Pager>
          {[1, 2, 3, 4, 5, 6, 7].map((n) => (
            <PageCell key={n} $active={n === 1}>{n}</PageCell>
          ))}
        </Pager>
      </Content>
    </Main>
    <Toast>
      <ToastTitle>
        <FaExclamationCircle />
        Device Message
      </ToastTitle>
      <ToastBody>New message recieved</ToastBody>
    </Toast>
  </Page>
);

export default App;
